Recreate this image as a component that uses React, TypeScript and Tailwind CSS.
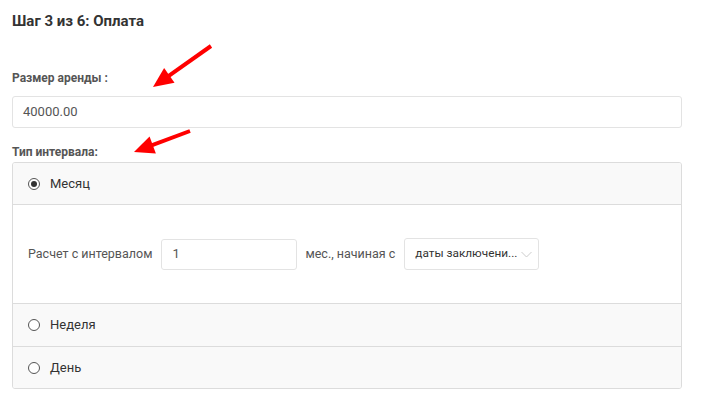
import React from "react";

function Radio({ checked }: { checked?: boolean }) {
  return (
    <span className="w-[12px] h-[12px] rounded-full border border-[#555] flex items-center justify-center bg-white shrink-0">
      {checked && <span className="w-[6px] h-[6px] rounded-full bg-[#333]" />}
    </span>
  );
}

function Arrow({ x1, y1, x2, y2 }: { x1: number; y1: number; x2: number; y2: number }) {
  const dx = x2 - x1;
  const dy = y2 - y1;
  const len = Math.sqrt(dx * dx + dy * dy);
  const ux = dx / len;
  const uy = dy / len;
  const headLen = 20;
  const headW = 9;
  const bx = x2 - ux * headLen;
  const by = y2 - uy * headLen;
  const px = -uy;
  const py = ux;
  const pts = `${x2},${y2} ${bx + px * headW},${by + py * headW} ${bx - px * headW},${by - py * headW}`;
  return (
    <g>
      <line x1={x1} y1={y1} x2={bx + ux * 2} y2={by + uy * 2} stroke="#ff0000" strokeWidth={4} strokeLinecap="butt" />
      <polygon points={pts} fill="#ff0000" />
    </g>
  );
}

export default function App() {
  return (
    <div className="relative w-[702px] h-[405px] bg-white overflow-hidden" style={{ fontFamily: "Roboto, 'Liberation Sans', sans-serif" }}>
      <div className="pl-3 pr-[20px] pt-[12px]">
        <div className="text-[15px] font-bold text-[#333] leading-[18px]">Шаг 3 из 6: Оплата</div>
        <div className="mt-[40px] text-[12px] font-bold text-[#555] leading-[16px]">Размер аренды :</div>
        <div className="mt-[10px] h-[32px] border border-[#e3e3e3] rounded-[3px] flex items-center px-[10px] text-[13px] text-[#555]">
          40000.00
        </div>
        <div className="mt-[16px] text-[12px] font-bold text-[#555] leading-[16px]">Тип интервала:</div>
        <div className="mt-[2px] border border-[#dcdcdc] rounded-[3px] overflow-hidden">
          <div className="h-[41px] bg-[#f9f9f9] flex items-center pl-[15px] gap-[10px] text-[13px] text-[#333]">
            <Radio checked />
            <span>Месяц</span>
          </div>
          <div className="h-[99px] bg-white border-t border-[#dcdcdc] flex items-center pl-[15px] text-[12.5px] text-[#555]">
            <span>Расчет с интервалом</span>
            <div className="ml-[9px] w-[136px] h-[31px] border border-[#e3e3e3] rounded-[3px] flex items-center px-[10px] text-[13px] text-[#555]">
              1
            </div>
            <span className="ml-[8px]">мес., начиная с</span>
            <div className="ml-[9px] w-[135px] h-[32px] border border-[#e3e3e3] rounded-[3px] flex items-center pl-[10px] pr-[6px] text-[11.8px] text-[#333]">
              <span className="whitespace-nowrap shrink-0">даты заключени...</span>
              <svg width="11" height="7" viewBox="0 0 11 7" className="ml-auto shrink-0">
                <path d="M0.5 1 L5.5 6 L10.5 1" fill="none" stroke="#ccc" strokeWidth="1" />
              </svg>
            </div>
          </div>
          <div className="h-[43px] bg-[#f9f9f9] border-t border-[#dcdcdc] flex items-center pl-[15px] gap-[10px] text-[13px] text-[#333]">
            <Radio />
            <span>Неделя</span>
          </div>
          <div className="h-[42px] bg-[#f9f9f9] border-t border-[#dcdcdc] flex items-center pl-[15px] gap-[10px] text-[13px] text-[#333]">
            <Radio />
            <span>День</span>
          </div>
        </div>
      </div>
      <svg className="absolute left-0 top-0 pointer-events-none" width="702" height="405">
        <Arrow x1={211} y1={46} x2={153} y2={87} />
        <Arrow x1={190} y1={131} x2={134} y2={152} />
      </svg>
    </div>
  );
}
